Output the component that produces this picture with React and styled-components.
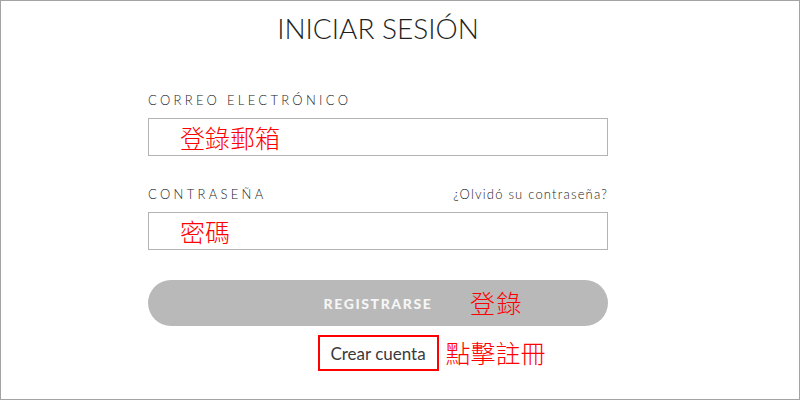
import React from "react";
import styled, { createGlobalStyle } from "styled-components";

const Global = createGlobalStyle`
  html, body { margin: 0; padding: 0; background: #fff; }
  * { box-sizing: border-box; }
`;

const Page = styled.div`
  width: 800px;
  height: 400px;
  border: 1px solid #a3a3a3;
  background: #fff;
  padding: 9px 0 0 147px;
  font-family: Lato, "Open Sans", sans-serif;
  color: #222;
`;

const Form = styled.div`
  width: 460px;
  display: flex;
  flex-direction: column;
`;

const Title = styled.h1`
  margin: 0 0 46px;
  font-size: 28px;
  line-height: 36px;
  font-weight: 300;
  text-align: center;
  color: #1e1e1e;
  letter-spacing: 0;
`;

const LabelRow = styled.div`
  display: flex;
  justify-content: space-between;
  align-items: baseline;
  margin: ${(p) => (p.$top ? `${p.$top}px` : "0")} 0 10px;
`;

const Label = styled.label`
  font-size: 13px;
  line-height: 16px;
  letter-spacing: 3.3px;
  font-weight: 300;
  color: #222;
`;

const Forgot = styled.a`
  font-size: 13px;
  line-height: 16px;
  letter-spacing: 1.2px;
  font-weight: 300;
  color: #222;
  text-decoration: none;
`;

const Field = styled.div`
  height: 38px;
  border: 1px solid #b3b3b3;
  display: flex;
  align-items: center;
  padding-left: 31px;
`;

const Note = styled.span`
  font-family: "Noto Sans CJK TC", "Noto Sans CJK SC", sans-serif;
  color: #ff0000;
  font-size: 25px;
  line-height: 30px;
  font-weight: 300;
`;

const Button = styled.button`
  position: relative;
  margin-top: 30px;
  height: 46px;
  width: 100%;
  border: none;
  border-radius: 23px;
  background: #b9b9b9;
  color: #f6f6f6;
  font-family: Lato, sans-serif;
  font-weight: 900;
  font-size: 14px;
  letter-spacing: 1.6px;
  padding: 0;
  cursor: pointer;
`;

const ButtonNote = styled(Note)`
  position: absolute;
  left: 322px;
  top: 7px;
`;

const CreateRow = styled.div`
  margin-top: 9px;
  display: flex;
  justify-content: center;
`;

const CreateBox = styled.div`
  position: relative;
  height: 36px;
  width: 121px;
  border: 2px solid #ff0000;
  display: flex;
  align-items: center;
  justify-content: center;
  font-size: 17px;
  font-weight: 400;
  color: #3a3a3a;
`;

const SideNote = styled(Note)`
  position: absolute;
  left: 126px;
  top: 0px;
  white-space: nowrap;
`;

export default function App() {
  return (
    <>
      <Global />
      <Page>
        <Form>
          <Title>INICIAR SESIÓN</Title>
          <LabelRow>
            <Label>CORREO ELECTRÓNICO</Label>
          </LabelRow>
          <Field>
            <Note>登錄郵箱</Note>
          </Field>
          <LabelRow $top={30}>
            <Label>CONTRASEÑA</Label>
            <Forgot href="#">¿Olvidó su contraseña?</Forgot>
          </LabelRow>
          <Field>
            <Note>密碼</Note>
          </Field>
          <Button>
            REGISTRARSE
            <ButtonNote>登錄</ButtonNote>
          </Button>
          <CreateRow>
            <CreateBox>
              Crear cuenta
              <SideNote>點擊註冊</SideNote>
            </CreateBox>
          </CreateRow>
        </Form>
      </Page>
    </>
  );
}
